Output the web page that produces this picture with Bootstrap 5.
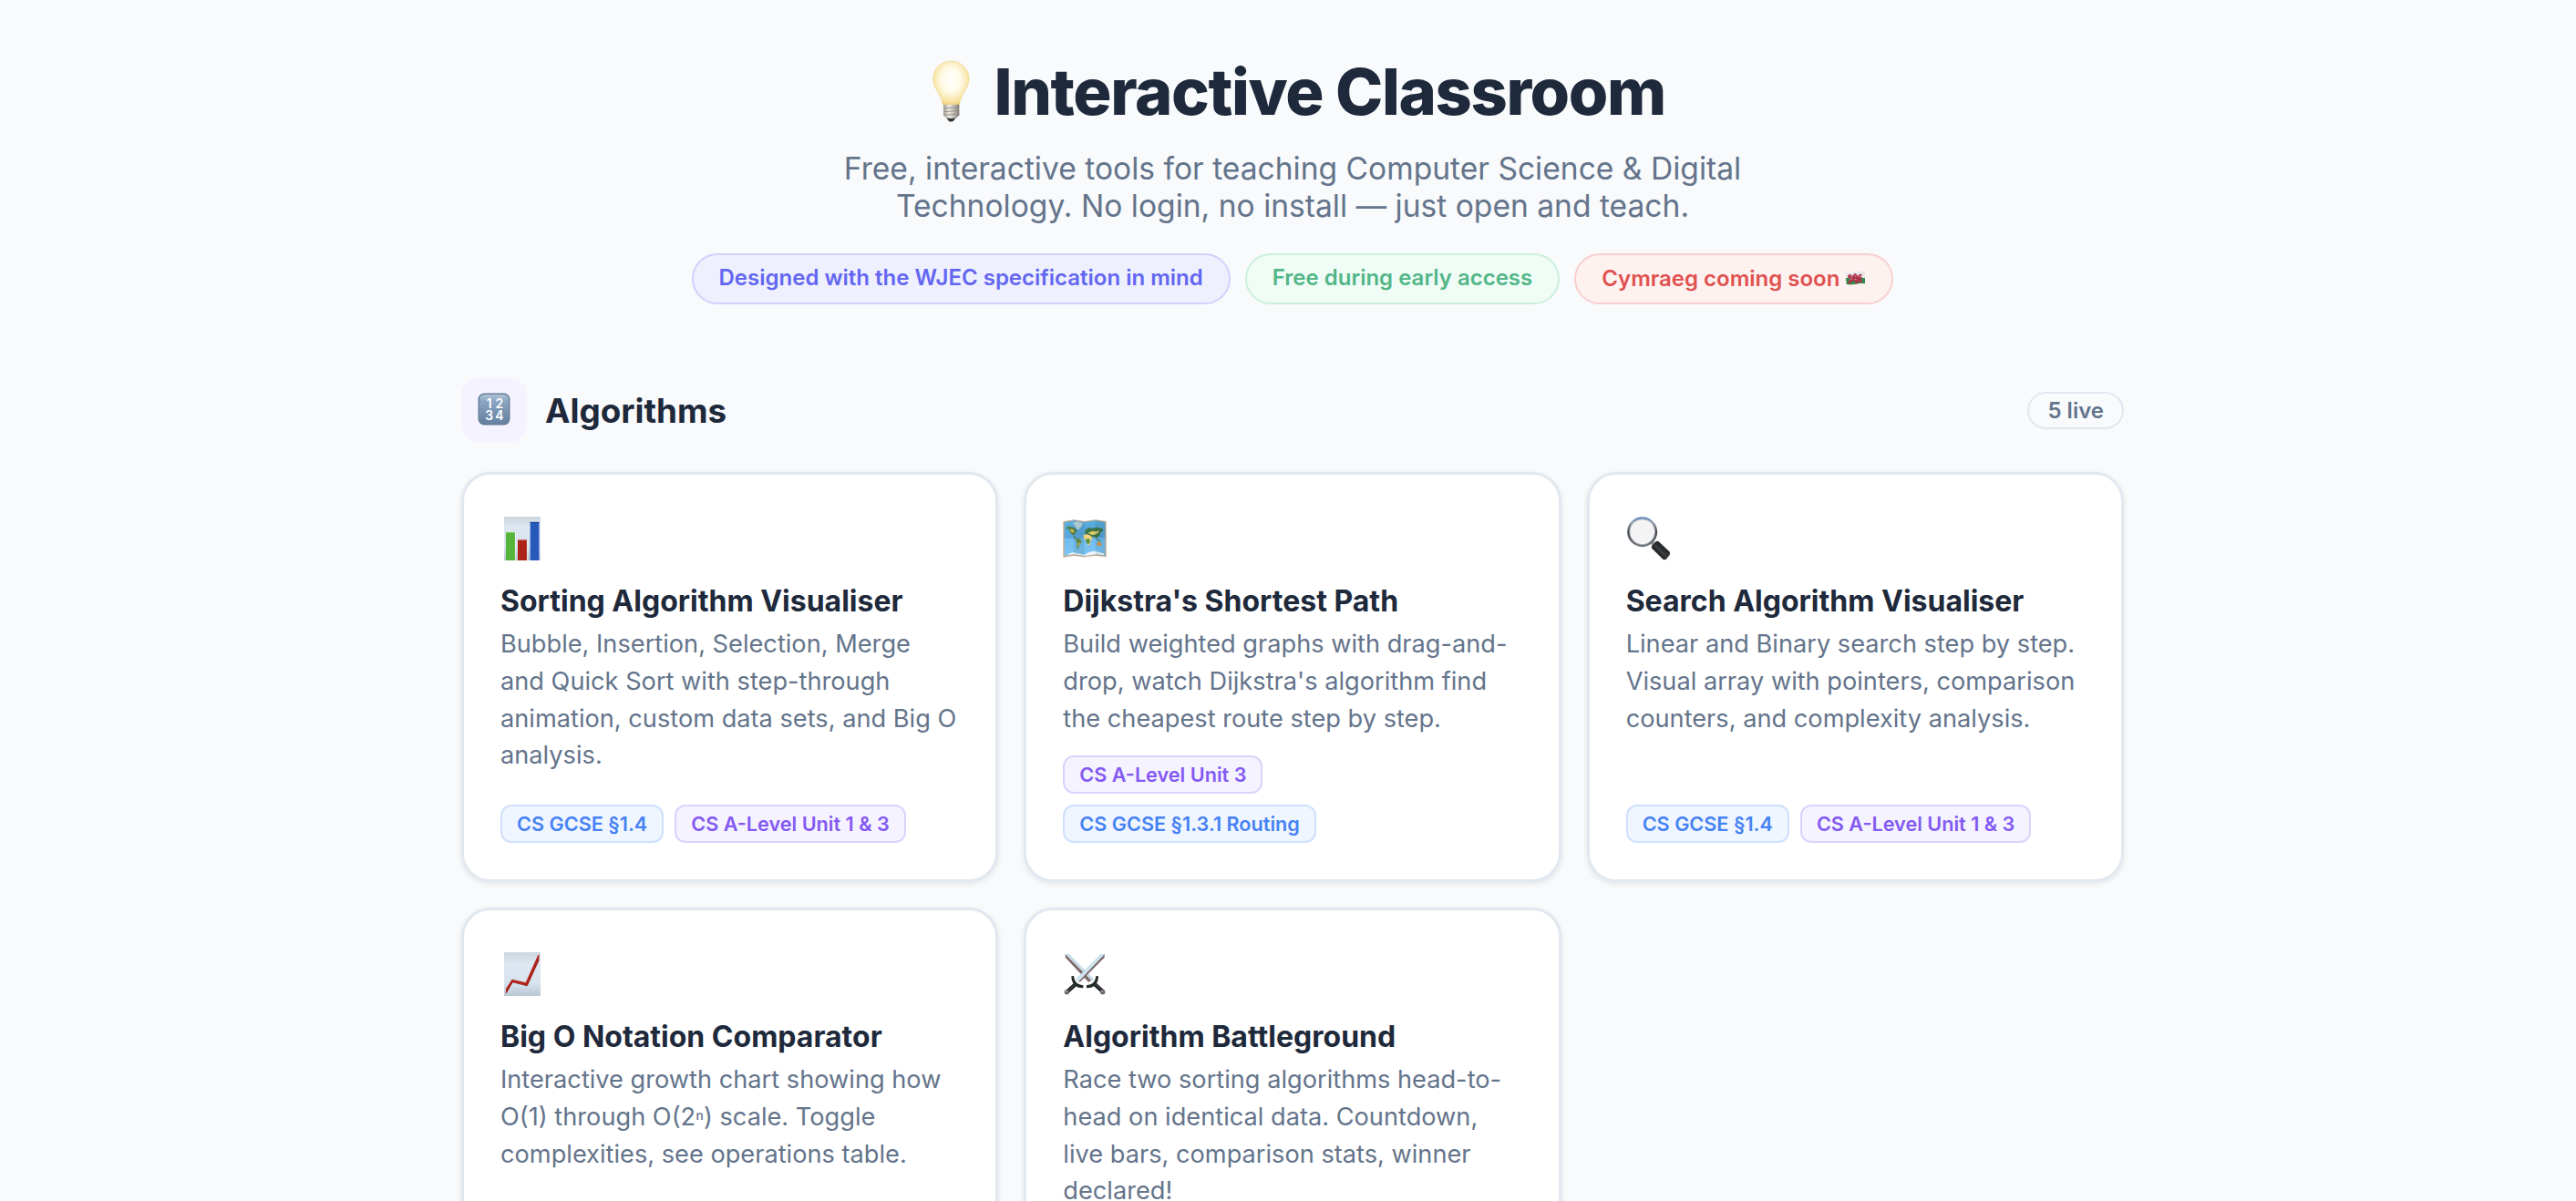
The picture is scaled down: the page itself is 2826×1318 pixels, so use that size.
<!DOCTYPE html>
<html lang="en">
<head>
<meta charset="utf-8">
<meta name="viewport" content="width=device-width, initial-scale=1">
<title>Interactive Classroom</title>
<link href="https://cdn.jsdelivr.net/npm/bootstrap@5.3.0/dist/css/bootstrap.min.css" rel="stylesheet">
<style>
  body { background: #f8fafc; color: #1e293b; font-family: Inter, "Noto Sans", sans-serif; }
  .page { height: 100vh; padding-left: 10px; }
  .page-inner { width: 1824px; padding-top: 58px; }
  .hero-title { font-size: 70.4px; line-height: 84px; font-weight: 800; letter-spacing: -.02em; gap: 9.4px; margin-bottom: 22px; }
  .hero-title span { padding-top: 1px; height: 84px; }
  .hero-sub { width: 1040px; font-size: 33.6px; line-height: 41px; color: #64748b; margin-bottom: 32px; }
  .pills { gap: 16px; margin-bottom: 80px; }
  .pill { border: 2px solid; height: 56px; padding: 10px 28px 0; font-size: 24px; line-height: 29px; font-weight: 600; }
  .pill-indigo { background: #eef0fe; border-color: #d0d2fb; color: #6366f1; }
  .pill-green { background: #f0fdf6; border-color: #ccefdd; color: #52b687; }
  .pill-red { background: #fef2f1; border-color: #f8cfce; color: #e0524f; padding-top: 11px; }
  .pill-red svg { vertical-align: 1px; }
  .section-head { gap: 20px; margin-bottom: 32px; }
  .section-icon { width: 72px; height: 72px; border-radius: 20px; background: #f5f3ff; padding-bottom: 2px; }
  .section-title { font-size: 36.8px; line-height: 44px; font-weight: 700; padding-top: 1px; }
  .live-count { border: 2px solid #e2e8f0; padding: 4px 20px; font-size: 24px; line-height: 29px; font-weight: 600; color: #64748b; }
  .tool-grid { --bs-gutter-x: 28px; --bs-gutter-y: 28px; }
  .tool-card { height: 450px; padding: 45px 40px 40px; background: #fff; border: 3px solid #e2e8f0; border-radius: 32px; box-shadow: 0 2px 6px rgba(15, 23, 42, .09); }
  .tool-icon { width: 50px; height: 50px; margin-bottom: 24px; }
  .tool-name { font-size: 32px; line-height: 39px; font-weight: 700; margin-bottom: 8px; }
  .tool-text { font-size: 27.2px; line-height: 40.8px; color: #64748b; margin-bottom: 0; }
  .sup-n { font-family: "Liberation Sans", sans-serif; font-size: 24px; line-height: 1; }
  .tags { gap: 12px; }
  .tag { height: 42px; padding: 6px 16px; border: 2px solid; border-radius: 12px; font-size: 21.65px; line-height: 26px; font-weight: 600; }
  .tag-blue { background: #f0f6ff; border-color: #cfe0fd; color: #4682f4; }
  .tag-violet { background: #f5f3ff; border-color: #dcd3fc; color: #8459f2; }
</style>
</head>
<body>
<div class="page overflow-hidden">
<main class="page-inner mx-auto">
  <header class="text-center">
    <h1 class="hero-title d-flex justify-content-center">
      <svg width="72" height="84" viewBox="29 24 216 252" aria-hidden="true">
        <defs>
          <radialGradient id="glow" cx=".5" cy=".42" r=".6"><stop offset="0" stop-color="#fffefa"/><stop offset=".45" stop-color="#fffbea"/><stop offset=".8" stop-color="#f8e5a6"/><stop offset="1" stop-color="#edcb72"/></radialGradient>
          <linearGradient id="screw"><stop offset="0" stop-color="#a09b92"/><stop offset=".35" stop-color="#eeeae4"/><stop offset=".7" stop-color="#bbb6ae"/><stop offset="1" stop-color="#827d76"/></linearGradient>
        </defs>
        <path d="M132 51c-33 0-59 26-59 59 0 32 27 48 32 85q27 6 54 0c5-37 32-53 32-85 0-33-26-59-59-59z" fill="url(#glow)" stroke="#edd591" stroke-width="2"/>
        <path d="M107 194h52v35q-5 8-11 10h-30q-8-3-11-10z" fill="url(#screw)"/>
        <path d="M107 207l52-4M107 218l52-4M108 229l51-4" stroke="#8b867e" stroke-width="2.500"/>
        <path d="M117 238q15 4 31 0l-8 10q-8 5-16 0z" fill="#393735"/>
      </svg>
      <span>Interactive Classroom</span>
    </h1>
    <p class="hero-sub mx-auto">Free, interactive tools for teaching Computer Science &amp; Digital Technology. No login, no install — just open and teach.</p>
    <div class="pills d-flex justify-content-center">
      <span class="pill pill-indigo rounded-pill">Designed with the WJEC specification in mind</span>
      <span class="pill pill-green rounded-pill">Free during early access</span>
      <span class="pill pill-red rounded-pill">Cymraeg coming soon
        <svg width="23" height="16" viewBox="0 0 69 48" aria-hidden="true">
          <path d="M2 5q16 5 32 0t32-1v21H3z" fill="#e6e8e7"/>
          <path d="M3 24h63v19q-16-3-31 1T5 45z" fill="#35894a"/>
          <path d="M10 15l8-4 4 6 6-2 4-7 8 6 2 5 6-8 9 2-5 6 5 5-6 3 5 6-4 9-5-7-6 3-1 6-7-2 2-6-8-2-6 3 2 5-7-2-1 4-6-3 5-9 4-7-4-2-4 3z" fill="#b02f48"/>
          <path d="M18 18l7 3M32 15l4 6M44 21l8-3M31 29h8M17 30l8-5" stroke="#dfc3ca" stroke-width="2"/>
        </svg></span>
    </div>
  </header>

  <section>
    <div class="section-head d-flex align-items-center">
      <div class="section-icon d-flex align-items-center justify-content-center">
        <svg width="36" height="36" viewBox="0 0 36 36" aria-hidden="true">
          <defs><linearGradient id="key" x2="0" y2="1"><stop offset="0" stop-color="#b6c8da"/><stop offset=".25" stop-color="#89a4c1"/><stop offset="1" stop-color="#647f9f"/></linearGradient></defs>
          <rect x="1.200" y="1.200" width="33.600" height="33.600" rx="6" fill="url(#key)" stroke="#667d96" stroke-width="1.400"/>
          <g fill="#fff" font-family="Inter, sans-serif" font-size="14" font-weight="600" text-anchor="middle"><text x="12.600" y="16.500">1</text><text x="23.800" y="16.500">2</text><text x="12.600" y="29.500">3</text><text x="23.800" y="29.500">4</text></g>
        </svg>
      </div>
      <h2 class="section-title mb-0">Algorithms</h2>
      <span class="live-count rounded-pill ms-auto">5 live</span>
    </div>

    <div class="row tool-grid">
      <div class="col-4">
        <article class="tool-card d-flex flex-column">
          <svg class="tool-icon" viewBox="27 48 150 150" aria-hidden="true">
            <defs>
              <linearGradient id="sheet" x2="0" y2="1"><stop offset="0" stop-color="#cfd8e0"/><stop offset=".25" stop-color="#e3ebf3"/><stop offset=".7" stop-color="#dce7f0"/><stop offset="1" stop-color="#b9c6d2"/></linearGradient>
              <pattern id="grid" width="6" height="6" patternUnits="userSpaceOnUse"><path d="M0 0H6M0 0V6" stroke="#b9cfe4" stroke-width="1.200"/></pattern>
            </defs>
            <path d="M39 51h120v144H39z" fill="url(#sheet)"/><path d="M39 51h120v144H39z" fill="url(#grid)" opacity=".7"/>
            <path d="M45 102h30v93H45z" fill="#55b43a"/><path d="M45 104h30" stroke="#7bd35b" stroke-width="3"/>
            <path d="M84 127h30v68H84z" fill="#ad2418"/><path d="M84 128h30" stroke="#c6776e" stroke-width="3"/>
            <path d="M125 69h30v126h-30z" fill="#2759ba"/><path d="M125 70h30" stroke="#173f92" stroke-width="3"/>
            <path d="M76 103v92M115 128v67M156 70v125" stroke="#fff" stroke-width="2" opacity=".7"/>
          </svg>
          <h3 class="tool-name">Sorting Algorithm Visualiser</h3>
          <p class="tool-text">Bubble, Insertion, Selection, Merge and Quick Sort with step-through animation, custom data sets, and Big O analysis.</p>
          <div class="tags d-flex flex-wrap mt-auto"><span class="tag tag-blue">CS GCSE §1.4</span><span class="tag tag-violet">CS A-Level Unit 1 &amp; 3</span></div>
        </article>
      </div>

      <div class="col-4">
        <article class="tool-card d-flex flex-column">
          <svg class="tool-icon" viewBox="49 48 150 150" aria-hidden="true">
            <defs><linearGradient id="sea" x2="0" y2="1"><stop offset="0" stop-color="#59acd9"/><stop offset=".49" stop-color="#58a5df"/><stop offset=".51" stop-color="#72bdf2"/><stop offset="1" stop-color="#7cc4f0"/></linearGradient></defs>
            <path d="M50 67l35-6 35 5 36-5 36 5v117l-36-4-36 5-35-5-35 6z" fill="#c9a98c"/>
            <path d="M54 70l31-6 35 5 36-5 32 5v110l-32-4-36 5-35-5-31 5z" fill="url(#sea)"/>
            <path d="M82 71l14-5 19 5-5 13-11 11-7-7z" fill="#bcd6df"/>
            <path d="M60 87l10-4 18 5 8 11-7 5-2 8-8-1-7-10-1-9-10-1z" fill="#4c7b43"/><path d="M73 91l12 3 3 6-8 6-6-7z" fill="#c3b04a"/>
            <path d="M82 113l9 6 3 6-7-2z" fill="#4c7b43"/>
            <path d="M93 124l8-2 10 9-5 11-4 5-3 11-4-6 1-13-4-8z" fill="#67903d"/><path d="M99 137l6-2-3 11-3 5z" fill="#e1c45a"/>
            <path d="M123 95l9-8 12 2 17-3 18 4 4 6-10 8-3 11-7 3-4 7-5-7-7-1-5 6-7-8-8-7-6-1z" fill="#3f7647"/>
            <path d="M132 104l12-5 13 1 12-3-4 8-14 6-8-1z" fill="#dccb68"/>
            <path d="M116 111l15-2 11 6 5 8-6 7-4 14-6 2-4-16-9-5z" fill="#efd27d"/><path d="M123 125l13-1 3 8-5 10-6-3z" fill="#5d9140"/>
            <path d="M162 137l8-4 6 7-1 7-6-1-8 1z" fill="#e4963f"/><path d="M160 127l13 3" stroke="#397441" stroke-width="3"/>
            <path d="M62 177l10-6 13-2 35 7 16-9 18-3 30 8v6l-28-3-36 5-35-5z" fill="#ecf5fb"/>
            <path d="M85 62l35 5v117l-35-5zM156 62l34 5v117l-34-5z" fill="#173b50" opacity=".1"/>
          </svg>
          <h3 class="tool-name">Dijkstra's Shortest Path</h3>
          <p class="tool-text">Build weighted graphs with drag-and-drop, watch Dijkstra's algorithm find the cheapest route step by step.</p>
          <div class="tags d-flex flex-wrap mt-auto"><span class="tag tag-violet">CS A-Level Unit 3</span><span class="tag tag-blue">CS GCSE §1.3.1 Routing</span></div>
        </article>
      </div>

      <div class="col-4">
        <article class="tool-card d-flex flex-column">
          <svg class="tool-icon" viewBox="41 48 150 150" aria-hidden="true">
            <defs>
              <linearGradient id="rim" x2="0" y2="1"><stop offset="0" stop-color="#6486bb"/><stop offset=".15" stop-color="#98a2ae"/><stop offset=".5" stop-color="#43484e"/><stop offset="1" stop-color="#6d7379"/></linearGradient>
              <linearGradient id="grip" x1="0" y1="1" x2="1" y2="0"><stop offset="0" stop-color="#050506"/><stop offset=".5" stop-color="#343638"/><stop offset="1" stop-color="#060607"/></linearGradient>
            </defs>
            <path d="M121 132l13 12" stroke="#9c9fa5" stroke-width="12"/>
            <path d="M138 133q5-4 10 0l35 33q4 5 1 11l-10 13q-5 5-12 1l-35-34q-5-5-1-11z" fill="url(#grip)"/>
            <path d="M137 148l32 31" stroke="#5f6366" stroke-width="3" opacity=".6"/>
            <circle cx="94" cy="101" r="45" fill="#f4f4f4" stroke="url(#rim)" stroke-width="9"/>
            <circle cx="94" cy="101" r="42" fill="none" stroke="#d3d8df" stroke-width="2"/>
          </svg>
          <h3 class="tool-name">Search Algorithm Visualiser</h3>
          <p class="tool-text">Linear and Binary search step by step. Visual array with pointers, comparison counters, and complexity analysis.</p>
          <div class="tags d-flex flex-wrap mt-auto"><span class="tag tag-blue">CS GCSE §1.4</span><span class="tag tag-violet">CS A-Level Unit 1 &amp; 3</span></div>
        </article>
      </div>

      <div class="col-4">
        <article class="tool-card d-flex flex-column">
          <svg class="tool-icon" viewBox="27 42 150 150" aria-hidden="true">
            <path d="M39 45h120v144H39z" fill="url(#sheet)"/><path d="M39 45h120v144H39z" fill="url(#grid)" opacity=".7"/>
            <path d="M45 165l20-31 45 11 41-92h3v20l-38 83-48-12-21 36h-2z" fill="#b6261d"/>
            <path d="M45 178l21-35 47 12 40-88" fill="none" stroke="#861b15" stroke-width="2"/>
          </svg>
          <h3 class="tool-name">Big O Notation Comparator</h3>
          <p class="tool-text">Interactive growth chart showing how O(1) through O(2<span class="sup-n">ⁿ</span>) scale. Toggle complexities, see operations table.</p>
        </article>
      </div>

      <div class="col-4">
        <article class="tool-card d-flex flex-column">
          <svg class="tool-icon" viewBox="49 42 150 150" aria-hidden="true">
            <path d="M57 51h13l82 83-10 8-83-80z" fill="#c7dce8"/><path d="M57 52v10l77 82 8-7z" fill="#81696a"/>
            <path d="M186 51h-13l-82 83 10 8 83-80z" fill="#c5e0ed"/><path d="M186 52v10l-78 79-9 2z" fill="#806b6e"/><path d="M180 53l-83 85" stroke="#e4f4fc" stroke-width="3"/>
            <path d="M90 151l-27 24M155 151l26 24" stroke="#202326" stroke-width="13"/>
            <path d="M86 153l-18 18M158 151l18 17" stroke="#525a61" stroke-width="3"/>
            <path d="M77 124l8-1q2 17 12 25 8 5 19 6v9q-18 1-28-9-11-11-11-30zM166 124l-8-1q-2 17-12 25-8 5-19 6v9q18 1 28-9 11-11 11-30z" fill="#252a2a"/>
            <circle cx="62" cy="176" r="8" fill="#6d6468"/><circle cx="180" cy="176" r="8" fill="#6d6468"/>
            <circle cx="60" cy="174" r="3" fill="#b9aeb4"/><circle cx="178" cy="174" r="3" fill="#b9aeb4"/>
          </svg>
          <h3 class="tool-name">Algorithm Battleground</h3>
          <p class="tool-text">Race two sorting algorithms head-to-head on identical data. Countdown, live bars, comparison stats, winner declared!</p>
        </article>
      </div>
    </div>
  </section>
</main>
</div>
<script src="https://cdn.jsdelivr.net/npm/bootstrap@5.3.0/dist/js/bootstrap.bundle.min.js"></script>
</body>
</html>
